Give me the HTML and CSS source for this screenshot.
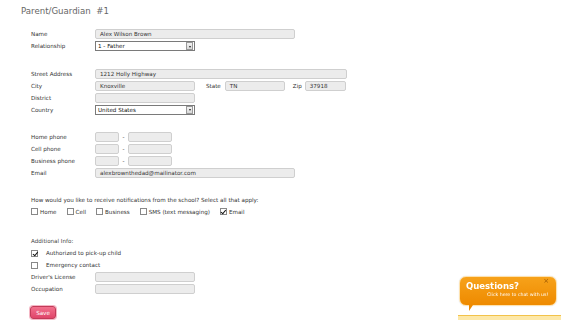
FILE: index.html
```html
<html>
  <head>
    <meta charset="utf-8" />
    <title>Parent/Guardian</title>
    <link rel="stylesheet" href="styles.css">
  </head>
  <body>
    <div class="page">
      <h2 class="title">Parent/Guardian &nbsp;#1</h2>
      <form class="form">
        <div class="section">
          <div class="row">
            <label>Name</label>
            <div class="field w200">Alex Wilson Brown</div>
          </div>
          <div class="row">
            <label>Relationship</label>
            <div class="select">1 - Father<span class="arrow"></span></div>
          </div>
        </div>

        <div class="section">
          <div class="row">
            <label>Street Address</label>
            <div class="field w252">1212 Holly Highway</div>
          </div>
          <div class="row">
            <label>City</label>
            <div class="field w100">Knoxville</div>
            <span class="inline-label state">State</span>
            <div class="field w60">TN</div>
            <span class="inline-label zip">Zip</span>
            <div class="field w41">37918</div>
          </div>
          <div class="row">
            <label>District</label>
            <div class="field w100"></div>
          </div>
          <div class="row">
            <label>Country</label>
            <div class="select">United States<span class="arrow"></span></div>
          </div>
        </div>

        <div class="section">
          <div class="row">
            <label>Home phone</label>
            <div class="field w24"></div><span class="dash">-</span><div class="field w44"></div>
          </div>
          <div class="row">
            <label>Cell phone</label>
            <div class="field w24"></div><span class="dash">-</span><div class="field w44"></div>
          </div>
          <div class="row">
            <label>Business phone</label>
            <div class="field w24"></div><span class="dash">-</span><div class="field w44"></div>
          </div>
          <div class="row">
            <label>Email</label>
            <div class="field w200">alexbrownthedad@mailinator.com</div>
          </div>
        </div>

        <div class="section notify">
          <p class="question">How would you like to receive notifications from the school? Select all that apply:</p>
          <div class="checks">
            <span class="check"><span class="box"></span>Home</span>
            <span class="check"><span class="box"></span>Cell</span>
            <span class="check"><span class="box"></span>Business</span>
            <span class="check"><span class="box"></span>SMS (text messaging)</span>
            <span class="check"><span class="box on"></span>Email</span>
          </div>
        </div>

        <div class="section last">
          <p class="heading">Additional Info:</p>
          <div class="row opt"><span class="box on"></span>Authorized to pick-up child</div>
          <div class="row opt"><span class="box"></span>Emergency contact</div>
          <div class="row">
            <label>Driver's License</label>
            <div class="field w100"></div>
          </div>
          <div class="row">
            <label>Occupation</label>
            <div class="field w100"></div>
          </div>
        </div>

        <button class="save" type="button">Save</button>
      </form>
    </div>

    <div class="chat">
      <div class="bubble">
        <span class="close">×</span>
        <div class="q">Questions?</div>
        <div class="sub">Click here to chat with us!</div>
        <span class="tail"></span>
      </div>
      <div class="chat-bar"></div>
    </div>
  </body>
</html>
```

FILE: styles.css
```css
* {
  box-sizing: border-box;
  margin: 0;
  padding: 0;
}

body {
  background: #fff;
  color: #333;
  font-family: 'DejaVu Sans', Verdana, sans-serif;
  font-size: 5.6px;
  overflow: hidden;
}

.title {
  font-weight: normal;
  font-size: 8.6px;
  color: #666;
  padding: 6px 0 0 21px;
  height: 28px;
}

.form {
  padding-left: 31px;
}

.section {
  margin-bottom: 15.5px;
}

.section.notify {
  margin-bottom: 17.5px;
}

.section.last {
  margin-bottom: 0;
}

.row {
  display: flex;
  align-items: center;
  height: 12px;
}

.row > label {
  width: 64px;
  flex: none;
}

.field {
  height: 10px;
  background: #ececec;
  border: 1px solid #cfcfcf;
  border-radius: 2px;
  padding-left: 4px;
  line-height: 8px;
  font-size: 5.6px;
  color: #333;
  white-space: nowrap;
}

.w24 { width: 24px; }
.w41 { width: 41px; }
.w44 { width: 44px; }
.w60 { width: 60px; }
.w100 { width: 100px; }
.w200 { width: 200px; }
.w252 { width: 252px; }

.inline-label.state {
  margin: 0 4px 0 11px;
}

.inline-label.zip {
  margin: 0 3px 0 8px;
}

.dash {
  width: 9px;
  text-align: center;
}

.select {
  position: relative;
  width: 100px;
  height: 10px;
  border: 1px solid #7a7a7a;
  background: #fff;
  padding-left: 2px;
  line-height: 8px;
  font-size: 5.6px;
  color: #111;
}

.select .arrow {
  position: absolute;
  right: 1px;
  top: 0;
  width: 7px;
  height: 8px;
  background: linear-gradient(#f4f4f4, #d8d8d8);
  border: 1px solid #999;
}

.select .arrow::after {
  content: '';
  position: absolute;
  left: 1.5px;
  top: 2.5px;
  border-left: 1.5px solid transparent;
  border-right: 1.5px solid transparent;
  border-top: 2px solid #222;
}

.question {
  height: 11px;
  line-height: 10px;
}

.checks {
  display: flex;
  align-items: center;
  height: 12px;
  gap: 10px;
}

.check {
  display: flex;
  align-items: center;
}

.box {
  position: relative;
  display: inline-block;
  width: 7px;
  height: 7px;
  border: 1px solid #888;
  background: #fff;
  margin-right: 2px;
  flex: none;
}

.box.on::after {
  content: '';
  position: absolute;
  left: 1.5px;
  top: 0;
  width: 2px;
  height: 3.5px;
  border-right: 1px solid #111;
  border-bottom: 1px solid #111;
  transform: rotate(40deg);
}

.heading {
  height: 12px;
  line-height: 12px;
  color: #444;
}

.opt .box {
  margin-right: 8px;
}

.save {
  margin-top: 11px;
  margin-left: -1px;
  width: 26px;
  height: 13px;
  border: 1px solid #c23a58;
  border-radius: 3px;
  background: linear-gradient(#f2708c, #e0456a);
  box-shadow: 0 0 0 1px #f4b7c5;
  color: #fff;
  font-family: 'DejaVu Sans', Verdana, sans-serif;
  font-size: 5.6px;
}

.chat {
  position: fixed;
  right: 0;
  bottom: 0;
  width: 103px;
  height: 44px;
}

.bubble {
  position: absolute;
  left: 1px;
  top: 0;
  width: 98px;
  height: 30px;
  border-radius: 7px;
  background: linear-gradient(#f7a21a, #ee8a00);
  border: 1px solid #fde2b0;
  box-shadow: 0 0 1px #c9c9c9;
  color: #fff;
}

.bubble .q {
  font-family: 'DejaVu Sans', Verdana, sans-serif;
  font-weight: bold;
  font-size: 8.5px;
  padding: 4px 0 0 6px;
}

.bubble .sub {
  font-size: 4.7px;
  padding: 1px 0 0 27px;
}

.bubble .close {
  position: absolute;
  right: 7px;
  top: 0;
  font-size: 7px;
  color: #a15a00;
}

.bubble .tail {
  position: absolute;
  left: 9px;
  bottom: -6px;
  border-left: 4px solid #ee8a00;
  border-right: 4px solid transparent;
  border-bottom: 6px solid transparent;
}

.chat-bar {
  position: absolute;
  left: 0;
  right: 0;
  bottom: 0;
  height: 5px;
  background: #fde8a8;
  border-top: 1px solid #f2c24a;
}
```
